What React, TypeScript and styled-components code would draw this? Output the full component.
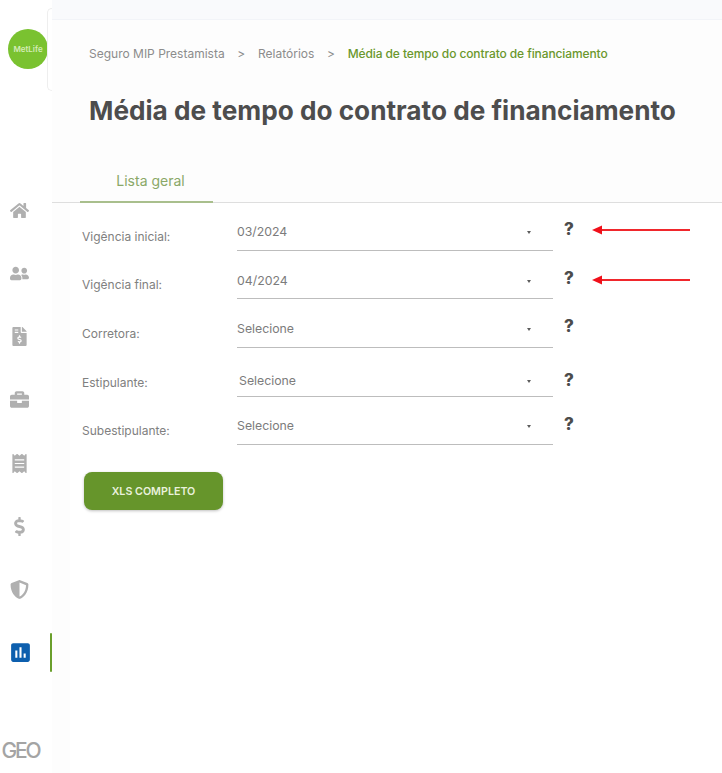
import React from 'react'
import styled, { createGlobalStyle } from 'styled-components'
import { FaHome, FaUserFriends, FaFileInvoiceDollar, FaBriefcase, FaReceipt, FaDollarSign, FaShieldAlt } from 'react-icons/fa'
import { MdAssessment } from 'react-icons/md'

const GlobalStyle = createGlobalStyle`
  html, body {
    margin: 0;
    padding: 0;
    background: #fff;
    font-family: Inter, "Liberation Sans", sans-serif;
  }
`

const Page = styled.div`
  display: flex;
  width: 722px;
  height: 773px;
  overflow: hidden;
`

const Sidebar = styled.aside`
  position: relative;
  display: flex;
  flex-direction: column;
  align-items: center;
  width: 52px;
  flex-shrink: 0;
  padding: 29px 0 0 4px;
  box-sizing: border-box;
  background: #fff;

  &::after {
    content: '';
    position: absolute;
    top: 8px;
    right: 0;
    width: 5px;
    height: 83px;
    box-sizing: border-box;
    border: 1px solid #eeeeee;
    border-right: 0;
    border-radius: 6px 0 0 6px;
  }
`

const Logo = styled.div`
  display: flex;
  align-items: center;
  justify-content: center;
  width: 40px;
  height: 40px;
  border-radius: 50%;
  background: #7ac230;
  color: #d5ecb8;
  font-size: 8px;
  font-weight: 600;
`

const NavList = styled.nav`
  display: flex;
  flex-direction: column;
  align-self: stretch;
  margin: 110px 0 0 -4px;
`

const NavItem = styled.div<{ $active?: boolean }>`
  position: relative;
  display: flex;
  align-items: center;
  justify-content: center;
  height: 63.15px;
  padding-right: 14px;
  color: #b0b0b0;
  font-size: 19px;

  ${props => props.$active && `
    color: #0d5fae;
    font-size: 25px;
    padding-right: 12px;
    &::after {
      content: '';
      position: absolute;
      right: 0;
      top: 12px;
      width: 2px;
      height: 39px;
      background: #6a9f2c;
      border-radius: 1px;
    }
  `}
`

const GeoMark = styled.div`
  margin: 54px 15px 0 0;
  color: #a4a4a4;
  font-size: 21px;
  font-weight: 500;
  letter-spacing: -2.2px;
`

const Main = styled.main`
  flex: 1;
  display: flex;
  flex-direction: column;
  min-width: 0;
  background: #fdfdfd;
`

const TopBar = styled.div`
  height: 19px;
  flex-shrink: 0;
  background: #f9fafc;
  border-bottom: 1px solid #f2f4f8;
`

const Header = styled.header`
  display: flex;
  flex-direction: column;
  flex-shrink: 0;
  background: #fdfdfd;
  border-bottom: 1px solid #dedede;
  padding: 0 0 0 28px;
  height: 183px;
  box-sizing: border-box;
`

const Breadcrumb = styled.div`
  display: flex;
  align-items: center;
  gap: 12.7px;
  margin: 25px 0 0 9px;
  height: 16px;
  font-size: 12px;
  color: #8c8c8c;
`

const CrumbCurrent = styled.span`
  color: #6a972c;
  font-weight: 500;
  letter-spacing: -0.1px;
`

const Title = styled.h1`
  margin: 33px 0 0 9px;
  font-size: 26.2px;
  line-height: 34px;
  font-weight: 700;
  color: #4d4d4d;
  white-space: nowrap;
`

const Tabs = styled.div`
  display: flex;
  margin-top: auto;
`

const Tab = styled.div`
  width: 133px;
  height: 43px;
  display: flex;
  align-items: center;
  justify-content: center;
  box-sizing: border-box;
  margin-bottom: -1px;
  padding-left: 8px;
  border-bottom: 2px solid #a9bf8d;
  color: #8aa868;
  font-size: 14px;
`

const Form = styled.form`
  flex: 1;
  display: flex;
  flex-direction: column;
  margin-left: 18px;
  padding: 0 0 0 12px;
  background: #fff;
`

const Row = styled.div<{ $height: number }>`
  display: flex;
  height: ${props => props.$height}px;
`

const Label = styled.label<{ $shift: number }>`
  width: 155px;
  align-self: flex-end;
  padding-bottom: ${props => props.$shift}px;
  font-size: 12px;
  line-height: 16px;
  color: #808080;
`

const SelectBox = styled.div<{ $indent?: number; $lift: number }>`
  display: flex;
  align-items: flex-end;
  justify-content: space-between;
  width: 316px;
  box-sizing: border-box;
  padding: 0 22px ${props => props.$lift}px ${props => props.$indent ?? 0}px;
  border-bottom: 1px solid #bdbdbd;
  font-size: 12.3px;
  line-height: 20px;
  color: #7c7c7c;
`

const Caret = styled.span`
  width: 0;
  height: 0;
  margin-bottom: 8px;
  border-left: 2.5px solid transparent;
  border-right: 2.5px solid transparent;
  border-top: 3px solid #5c5c5c;
`

const Help = styled.span<{ $lift: number }>`
  align-self: flex-end;
  width: 14px;
  margin: 0 0 ${props => props.$lift}px 9px;
  font-size: 17px;
  line-height: 20px;
  font-weight: 800;
  color: #4c4c4c;
  text-align: center;
`

const ArrowMark = styled.svg<{ $lift: number }>`
  align-self: flex-end;
  width: 100px;
  height: 12px;
  margin: 0 0 ${props => props.$lift}px 16px;
`

const XlsButton = styled.button`
  width: 139px;
  height: 38px;
  margin: 27px 0 0 2px;
  border: 0;
  border-radius: 8px;
  background: #66952b;
  box-shadow: 0 1px 3px rgba(0, 0, 0, 0.25);
  color: #e9f1dd;
  font-family: inherit;
  font-size: 10.7px;
  font-weight: 600;
`

const navIcons = [FaHome, FaUserFriends, FaFileInvoiceDollar, FaBriefcase, FaReceipt, FaDollarSign, FaShieldAlt]

const fields = [
  { label: 'Vigência inicial:', value: '03/2024', height: 48, shift: 6, lift: 8, help: 12, arrow: 15 },
  { label: 'Vigência final:', value: '04/2024', height: 48, shift: 6, lift: 7, help: 11, arrow: 13 },
  { label: 'Corretora:', value: 'Selecione', height: 49, shift: 6, lift: 8, help: 12 },
  { label: 'Estipulante:', value: 'Selecione', height: 49, shift: 6, lift: 5, help: 7, indent: 2 },
  { label: 'Subestipulante:', value: 'Selecione', height: 48, shift: 6, lift: 8, help: 11 },
]

export default function App() {
  return (
    <Page>
      <GlobalStyle />
      <Sidebar>
        <Logo>MetLife</Logo>
        <NavList>
          {navIcons.map((Icon, i) => (
            <NavItem key={i}><Icon /></NavItem>
          ))}
          <NavItem $active><MdAssessment /></NavItem>
        </NavList>
        <GeoMark>GEO</GeoMark>
      </Sidebar>
      <Main>
        <TopBar />
        <Header>
          <Breadcrumb>
            <span>Seguro MIP Prestamista</span>
            <span>&gt;</span>
            <span>Relatórios</span>
            <span>&gt;</span>
            <CrumbCurrent>Média de tempo do contrato de financiamento</CrumbCurrent>
          </Breadcrumb>
          <Title>Média de tempo do contrato de financiamento</Title>
          <Tabs>
            <Tab>Lista geral</Tab>
          </Tabs>
        </Header>
        <Form>
          {fields.map(f => (
            <Row key={f.label} $height={f.height}>
              <Label $shift={f.shift}>{f.label}</Label>
              <SelectBox $indent={f.indent} $lift={f.lift}>
                <span>{f.value}</span>
                <Caret />
              </SelectBox>
              <Help $lift={f.help}>?</Help>
              {f.arrow && (
                <ArrowMark $lift={f.arrow} viewBox="0 0 100 12">
                  <path d="M8 6H98" stroke="#f0272c" strokeWidth="2" />
                  <path d="M0 6L10 1.5V10.5Z" fill="#f0101a" />
                </ArrowMark>
              )}
            </Row>
          ))}
          <XlsButton type="button">XLS COMPLETO</XlsButton>
        </Form>
      </Main>
    </Page>
  )
}
